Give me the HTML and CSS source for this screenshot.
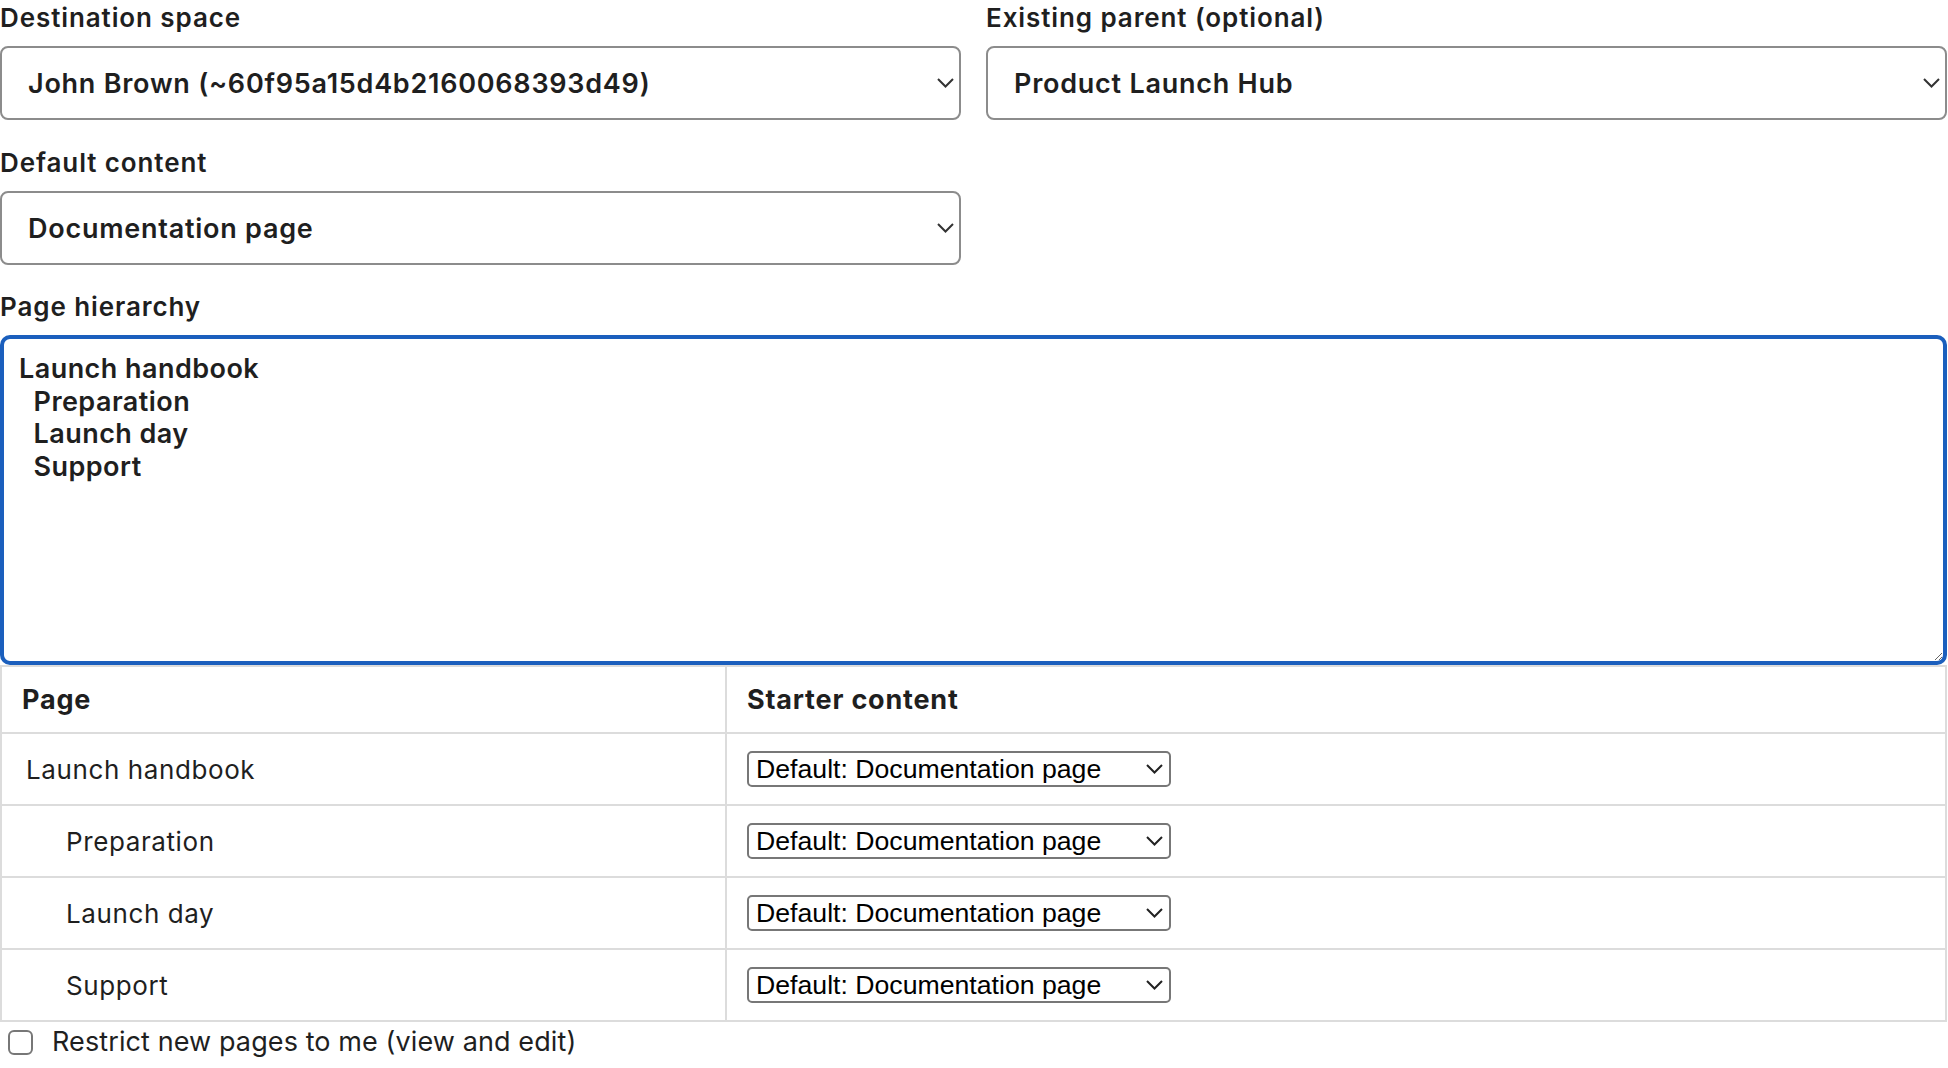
FILE: index.html
```html
<!DOCTYPE html>
<html lang="en">
<head>
    <meta charset="UTF-8">
    <meta name="viewport" content="width=device-width, initial-scale=1.0">
    <title>Create page tree</title>
    <link rel="stylesheet" href="styles.css">
</head>
<body>
    <form class="tree-form">
        <div class="field-row">
            <div class="field">
                <label for="space">Destination space</label>
                <div class="select-wrap">
                    <select id="space" class="big-select">
                        <option>John Brown (~60f95a15d4b2160068393d49)</option>
                    </select>
                    <svg class="chev" width="17" height="10" viewBox="0 0 17 10"><path d="M1 1l7.5 7.5L16 1" fill="none" stroke="#333" stroke-width="2"/></svg>
                </div>
            </div>
            <div class="field">
                <label for="parent">Existing parent (optional)</label>
                <div class="select-wrap">
                    <select id="parent" class="big-select">
                        <option>Product Launch Hub</option>
                    </select>
                    <svg class="chev" width="17" height="10" viewBox="0 0 17 10"><path d="M1 1l7.5 7.5L16 1" fill="none" stroke="#333" stroke-width="2"/></svg>
                </div>
            </div>
        </div>
        <div class="field-row second">
            <div class="field">
                <label for="default">Default content</label>
                <div class="select-wrap">
                    <select id="default" class="big-select">
                        <option>Documentation page</option>
                    </select>
                    <svg class="chev" width="17" height="10" viewBox="0 0 17 10"><path d="M1 1l7.5 7.5L16 1" fill="none" stroke="#333" stroke-width="2"/></svg>
                </div>
            </div>
        </div>
        <div class="field">
            <label for="hierarchy">Page hierarchy</label>
            <textarea id="hierarchy" class="hierarchy">Launch handbook
  Preparation
  Launch day
  Support</textarea>
        </div>
        <table class="pages">
            <colgroup><col class="col-page"><col></colgroup>
            <thead>
                <tr><th>Page</th><th>Starter content</th></tr>
            </thead>
            <tbody>
                <tr>
                    <td>Launch handbook</td>
                    <td><div class="select-wrap small"><select class="small-select"><option>Default: Documentation page</option></select><svg class="chev" width="17" height="10" viewBox="0 0 17 10"><path d="M1 1l7.5 7.5L16 1" fill="none" stroke="#222" stroke-width="2"/></svg></div></td>
                </tr>
                <tr>
                    <td class="child">Preparation</td>
                    <td><div class="select-wrap small"><select class="small-select"><option>Default: Documentation page</option></select><svg class="chev" width="17" height="10" viewBox="0 0 17 10"><path d="M1 1l7.5 7.5L16 1" fill="none" stroke="#222" stroke-width="2"/></svg></div></td>
                </tr>
                <tr>
                    <td class="child">Launch day</td>
                    <td><div class="select-wrap small"><select class="small-select"><option>Default: Documentation page</option></select><svg class="chev" width="17" height="10" viewBox="0 0 17 10"><path d="M1 1l7.5 7.5L16 1" fill="none" stroke="#222" stroke-width="2"/></svg></div></td>
                </tr>
                <tr>
                    <td class="child">Support</td>
                    <td><div class="select-wrap small"><select class="small-select"><option>Default: Documentation page</option></select><svg class="chev" width="17" height="10" viewBox="0 0 17 10"><path d="M1 1l7.5 7.5L16 1" fill="none" stroke="#222" stroke-width="2"/></svg></div></td>
                </tr>
            </tbody>
        </table>
        <label class="restrict"><input type="checkbox"> Restrict new pages to me (view and edit)</label>
    </form>
</body>
</html>
```

FILE: styles.css
```css
body { margin: 0; font-family: Inter, "Noto Sans", sans-serif; color: #1f1f1f; background: #fff; }
.tree-form { padding: 0 1px 0 0; }
.field-row { display: grid; grid-template-columns: 1fr 1fr; column-gap: 25px; margin-bottom: 25px; }
.field-row.second { margin-bottom: 27px; }
.field label { display: block; font-size: 26px; font-weight: 600; letter-spacing: 0.9px; line-height: 30px; margin: 3px 0 13px; }
.select-wrap { position: relative; }
.select-wrap .chev { position: absolute; right: 7px; top: 50%; margin-top: -5px; pointer-events: none; }
.big-select { appearance: none; -webkit-appearance: none; display: block; width: 100%; height: 74px; box-sizing: border-box; border: 2px solid #8c8c8c; border-radius: 8px; background: #fff; padding: 0 40px 0 26px; font-family: Inter, "Noto Sans", sans-serif; font-size: 27px; font-weight: 600; letter-spacing: 0.75px; color: #1f1f1f; }
.hierarchy { display: block; width: 100%; height: 330px; box-sizing: border-box; border: 4px solid #1b5fbd; border-radius: 10px; padding: 14px 15px 12px; font-family: Inter, "Noto Sans", sans-serif; font-size: 27px; font-weight: 600; letter-spacing: 0.45px; line-height: 32.5px; color: #1f1f1f; outline: none; resize: vertical; }
.pages { width: 100%; table-layout: fixed; border-collapse: collapse; margin-top: 0; }
.col-page { width: 725px; }
.pages th, .pages td { border: 2px solid #dcdcdc; padding: 0 20px; text-align: left; }
.pages th { height: 65px; font-size: 27px; font-weight: 700; letter-spacing: 0.8px; }
.pages td { height: 70px; font-size: 26px; letter-spacing: 0.6px; }
.pages td:first-child { padding-left: 24px; }
.pages td.child { padding-left: 64px; }
.select-wrap.small { width: 424px; }
.select-wrap.small .chev { right: 8px; }
.small-select { appearance: none; -webkit-appearance: none; display: block; width: 100%; height: 36px; box-sizing: border-box; border: 2px solid #777; border-radius: 5px; background: #fff; padding: 0 30px 0 7px; font-family: "Liberation Sans", Arial, sans-serif; font-size: 26.67px; color: #000; }
.restrict { display: flex; align-items: center; gap: 19px; margin: 4px 0 0 8px; font-size: 27px; letter-spacing: 0.1px; line-height: 32px; }
.restrict input { appearance: none; -webkit-appearance: none; width: 25px; height: 25px; margin: 0; border: 2px solid #777; border-radius: 6px; background: #fff; }
```
